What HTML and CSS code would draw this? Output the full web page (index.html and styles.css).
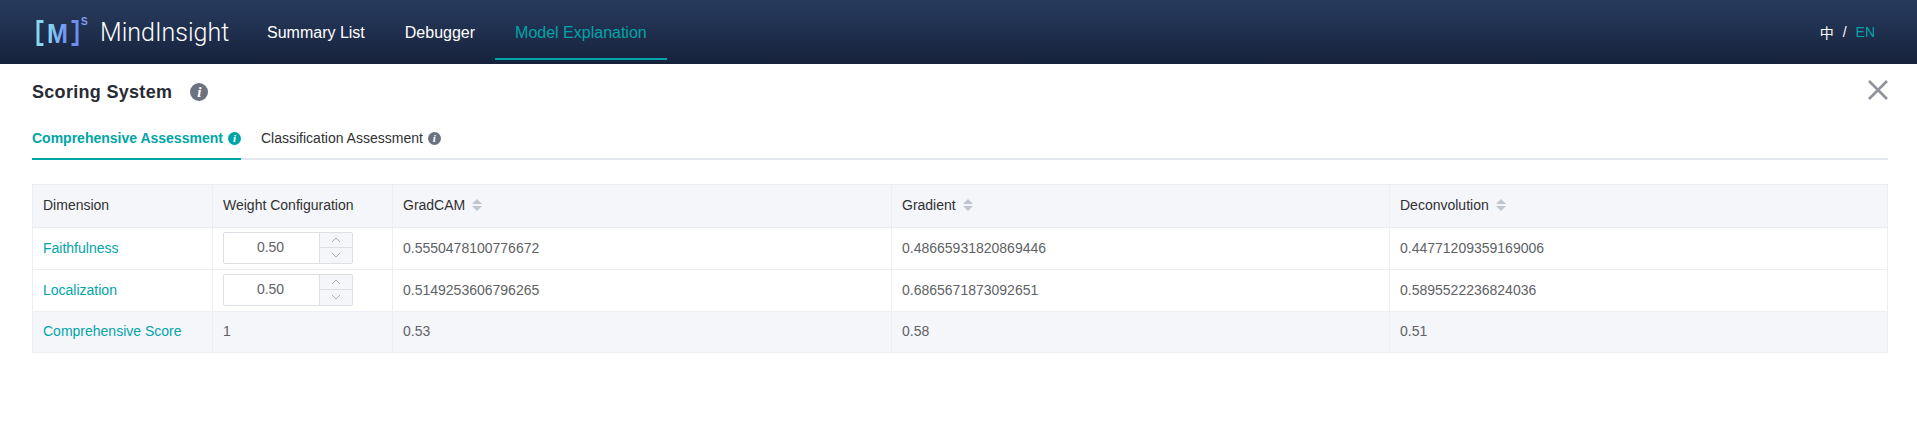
FILE: index.html
```html
<!DOCTYPE html>
<html lang="en">
<head>
<meta charset="utf-8">
<title>MindInsight</title>
<link rel="stylesheet" href="styles.css">
</head>
<body>
<header class="topbar">
  <div class="brand">
    <svg class="logo" width="56" height="34" viewBox="0 0 56 34">
      <defs>
        <linearGradient id="lg" x1="0" y1="0" x2="1" y2="0">
          <stop offset="0" stop-color="#8fdcf5"/>
          <stop offset="1" stop-color="#6a8cf0"/>
        </linearGradient>
      </defs>
      <path d="M8.5 6.5H3V29.5H8.5" fill="none" stroke="#86d6f2" stroke-width="3"/>
      <path d="M36.5 6.5H42V29.5H36.5" fill="none" stroke="#6f8ff0" stroke-width="3"/>
      <text x="12" y="27.5" class="logo-m" fill="url(#lg)" textLength="21" lengthAdjust="spacingAndGlyphs">M</text>
      <text x="46" y="10" class="logo-s">S</text>
    </svg>
    <span class="brand-name">MindInsight</span>
  </div>
  <nav class="nav">
    <a class="nav-item">Summary List</a>
    <a class="nav-item">Debugger</a>
    <a class="nav-item is-active">Model Explanation</a>
  </nav>
  <div class="lang"><span class="lang-zh">中</span><span class="lang-sep">/</span><span class="lang-on">EN</span></div>
</header>
<main class="page">
  <div class="title-row">
    <h1 class="title">Scoring System</h1>
    <span class="info info-lg">i</span>
    <svg class="close" width="20" height="20" viewBox="0 0 20 20"><path d="M1 1L19 19M19 1L1 19" stroke="#8d929c" stroke-width="2.6" fill="none"/></svg>
  </div>
  <div class="tabs">
    <div class="tab is-active">Comprehensive Assessment<span class="info info-teal">i</span></div>
    <div class="tab">Classification Assessment<span class="info">i</span></div>
  </div>
  <table class="grid">
    <colgroup>
      <col class="c1"><col class="c2"><col class="c3"><col class="c4"><col class="c5">
    </colgroup>
    <thead>
      <tr>
        <th>Dimension</th>
        <th>Weight Configuration</th>
        <th>GradCAM<span class="sort"><i class="up"></i><i class="down"></i></span></th>
        <th>Gradient<span class="sort"><i class="up"></i><i class="down"></i></span></th>
        <th>Deconvolution<span class="sort"><i class="up"></i><i class="down"></i></span></th>
      </tr>
    </thead>
    <tbody>
      <tr>
        <td class="link">Faithfulness</td>
        <td>
          <div class="stepper">
            <span class="stepper-val">0.50</span>
            <span class="stepper-btns">
              <span class="step"><svg width="10" height="6" viewBox="0 0 10 6"><path d="M1 5L5 1L9 5" fill="none" stroke="#a8acb4"/></svg></span>
              <span class="step"><svg width="10" height="6" viewBox="0 0 10 6"><path d="M1 1L5 5L9 1" fill="none" stroke="#a8acb4"/></svg></span>
            </span>
          </div>
        </td>
        <td>0.5550478100776672</td>
        <td>0.48665931820869446</td>
        <td>0.44771209359169006</td>
      </tr>
      <tr>
        <td class="link">Localization</td>
        <td>
          <div class="stepper">
            <span class="stepper-val">0.50</span>
            <span class="stepper-btns">
              <span class="step"><svg width="10" height="6" viewBox="0 0 10 6"><path d="M1 5L5 1L9 5" fill="none" stroke="#a8acb4"/></svg></span>
              <span class="step"><svg width="10" height="6" viewBox="0 0 10 6"><path d="M1 1L5 5L9 1" fill="none" stroke="#a8acb4"/></svg></span>
            </span>
          </div>
        </td>
        <td>0.5149253606796265</td>
        <td>0.6865671873092651</td>
        <td>0.5895522236824036</td>
      </tr>
      <tr class="total">
        <td class="link">Comprehensive Score</td>
        <td>1</td>
        <td>0.53</td>
        <td>0.58</td>
        <td>0.51</td>
      </tr>
    </tbody>
  </table>
</main>
</body>
</html>
```
FILE: styles.css
```css
* { box-sizing: border-box; }
html, body { margin: 0; padding: 0; background: #fff; }
body { font-family: "Liberation Sans", Arial, sans-serif; font-size: 14px; color: #333; height: 430px; overflow: hidden; }

.topbar { height: 64px; display: flex; align-items: stretch; background: linear-gradient(180deg, #283b5e 0%, #16223c 100%); color: #fff; padding-right: 42px; }
.brand { display: flex; align-items: center; padding-left: 35px; width: 247px; }
.logo { display: block; flex: none; margin-right: 9px; }
.logo-m { font: bold 27px "Liberation Sans", sans-serif; }
.logo-s { font: bold 10px "Liberation Sans", sans-serif; fill: #7f9ff0; }
.brand-name { font-family: Roboto, sans-serif; font-weight: 300; font-size: 25px; }
.nav { display: flex; flex: 1; }
.nav-item { padding: 0 20px; font-size: 16px; line-height: 66px; height: 60px; color: #fff; }
.nav-item.is-active { color: #00a5a7; border-bottom: 2px solid #00a5a7; }
.lang { display: flex; align-items: center; font-size: 14px; }
.lang-zh { font-family: "Noto Sans CJK SC", sans-serif; }
.lang-sep { margin: 0 9px; }
.lang-on { color: #00a5a7; }

.page { padding: 0 29px 0 32px; }
.title-row { position: relative; display: flex; align-items: center; height: 56px; }
.title { margin: 0; font-size: 18px; font-weight: bold; letter-spacing: 0.3px; color: #282b33; }
.close { position: absolute; right: 0; top: 16px; }
.info { display: inline-block; width: 13px; height: 13px; border-radius: 50%; background: #6c7280; color: #fff; font: italic bold 11px/13px "Liberation Serif", serif; text-align: center; margin-left: 5px; flex: none; vertical-align: 1px; }
.info-lg { width: 18px; height: 18px; font-size: 15px; line-height: 18px; margin-left: 18px; }
.info-teal { background: #00a5a7; }

.tabs { display: flex; height: 40px; border-bottom: 2px solid #e4e7ed; margin-bottom: 24px; }
.tab { height: 40px; line-height: 36px; font-size: 14px; color: #303133; white-space: nowrap; }
.tab.is-active { width: 209px; color: #00a5a7; font-weight: bold; border-bottom: 2px solid #00a5a7; margin-right: 20px; }

.grid { width: 1856px; border-collapse: separate; border-spacing: 0; table-layout: fixed; font-size: 14px; }
.c1 { width: 181px; } .c2 { width: 180px; } .c3 { width: 499px; } .c4 { width: 498px; } .c5 { width: 498px; }
.grid th, .grid td { border-right: 1px solid #ebeef5; border-bottom: 1px solid #ebeef5; padding: 0 10px 2px; text-align: left; font-weight: normal; white-space: nowrap; }
.grid th:first-child, .grid td:first-child { border-left: 1px solid #ebeef5; }
.grid th { height: 44px; border-top: 1px solid #ebeef5; background: #f5f6fa; color: #303133; }
.grid td { height: 42px; color: #606266; }
.grid td.link { color: #00a5a7; }
.grid .total td { height: 41px; background: #f5f6fa; }
.sort { display: inline-flex; flex-direction: column; gap: 2px; vertical-align: middle; margin: 0 0 2px 7px; }
.sort i { display: block; width: 0; height: 0; border-left: 5px solid transparent; border-right: 5px solid transparent; }
.sort .up { border-bottom: 5px solid #c0c4cc; }
.sort .down { border-top: 5px solid #c0c4cc; }

.stepper { display: flex; width: 130px; height: 32px; border: 1px solid #dcdfe6; border-radius: 2px; }
.stepper-val { flex: 1; padding-right: 2px; text-align: center; line-height: 29px; color: #606266; }
.stepper-btns { width: 33px; display: flex; flex-direction: column; border-left: 1px solid #dcdfe6; background: #f5f6fa; }
.step { flex: 1; display: flex; align-items: center; justify-content: center; }
.step + .step { border-top: 1px solid #dcdfe6; }
```
